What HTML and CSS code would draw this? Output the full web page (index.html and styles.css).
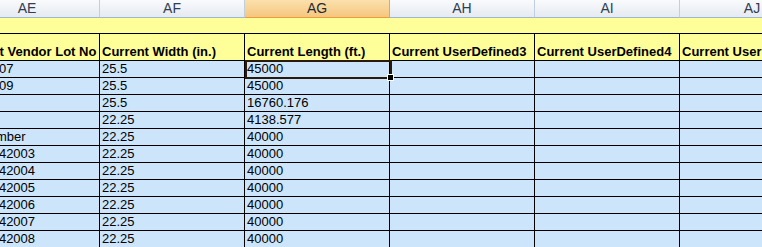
FILE: index.html
```html
<!DOCTYPE html>
<html>
<head>
<meta charset="utf-8">
<link rel="stylesheet" href="styles.css">
</head>
<body>
<div class="sheet">
  <div class="colheads">
    <div class="ch">AE</div>
    <div class="ch">AF</div>
    <div class="ch ch-active">AG</div>
    <div class="ch">AH</div>
    <div class="ch">AI</div>
    <div class="ch">AJ</div>
  </div>
  <div class="band"></div>
  <div class="grid">
    <div class="cell hd">Current Vendor Lot No</div>
    <div class="cell hd">Current Width (in.)</div>
    <div class="cell hd">Current Length (ft.)</div>
    <div class="cell hd">Current UserDefined3</div>
    <div class="cell hd">Current UserDefined4</div>
    <div class="cell hd">Current UserDefined5</div>

    <div class="cell">PKG1007</div><div class="cell">25.5</div><div class="cell">45000</div><div class="cell"></div><div class="cell"></div><div class="cell"></div>
    <div class="cell">PKG1009</div><div class="cell">25.5</div><div class="cell">45000</div><div class="cell"></div><div class="cell"></div><div class="cell"></div>
    <div class="cell"></div><div class="cell">25.5</div><div class="cell">16760.176</div><div class="cell"></div><div class="cell"></div><div class="cell"></div>
    <div class="cell"></div><div class="cell">22.25</div><div class="cell">4138.577</div><div class="cell"></div><div class="cell"></div><div class="cell"></div>
    <div class="cell">PO Number</div><div class="cell">22.25</div><div class="cell">40000</div><div class="cell"></div><div class="cell"></div><div class="cell"></div>
    <div class="cell">PKG1042003</div><div class="cell">22.25</div><div class="cell">40000</div><div class="cell"></div><div class="cell"></div><div class="cell"></div>
    <div class="cell">PKG1042004</div><div class="cell">22.25</div><div class="cell">40000</div><div class="cell"></div><div class="cell"></div><div class="cell"></div>
    <div class="cell">PKG1042005</div><div class="cell">22.25</div><div class="cell">40000</div><div class="cell"></div><div class="cell"></div><div class="cell"></div>
    <div class="cell">PKG1042006</div><div class="cell">22.25</div><div class="cell">40000</div><div class="cell"></div><div class="cell"></div><div class="cell"></div>
    <div class="cell">PKG1042007</div><div class="cell">22.25</div><div class="cell">40000</div><div class="cell"></div><div class="cell"></div><div class="cell"></div>
    <div class="cell">PKG1042008</div><div class="cell">22.25</div><div class="cell">40000</div><div class="cell"></div><div class="cell"></div><div class="cell"></div>
  </div>
  <div class="selection"><span class="handle"></span></div>
</div>
</body>
</html>
```
FILE: styles.css
```css
html, body {
  margin: 0;
  padding: 0;
  background: #ffffff;
}
body {
  width: 762px;
  height: 247px;
  overflow: hidden;
  font-family: "Liberation Sans", Arial, sans-serif;
}
.sheet {
  position: relative;
  width: 870px;
  margin-left: -45px;
}
.colheads {
  display: flex;
  height: 18px;
}
.ch {
  box-sizing: border-box;
  width: 145px;
  height: 18px;
  flex: none;
  border-right: 1px solid #c0cedd;
  border-bottom: 1px solid #9eb6ce;
  background: linear-gradient(#f9fafc, #e5eaf1);
  color: #2f3e52;
  font-size: 14px;
  line-height: 17px;
  text-align: center;
}
.ch-active {
  background: linear-gradient(#fbe0ac, #f5c77e);
  border-right-color: #f2a44b;
  border-bottom-color: #f29b3c;
  color: #1f2a38;
}
.band {
  box-sizing: border-box;
  height: 16px;
  background: #ffff99;
  border-bottom: 1px solid #000000;
}
.grid {
  display: grid;
  grid-template-columns: repeat(6, 145px);
  grid-template-rows: 27px;
  grid-auto-rows: 17px;
}
.cell {
  box-sizing: border-box;
  border-right: 1px solid #000000;
  border-bottom: 1px solid #000000;
  background: #cce5fb;
  padding: 0 2px;
  font-size: 13px;
  line-height: 16px;
  color: #000000;
  white-space: nowrap;
  overflow: hidden;
  display: flex;
  align-items: flex-end;
}
.hd {
  background: #ffff99;
  font-weight: bold;
}
.selection {
  position: absolute;
  left: 290px;
  top: 60px;
  width: 147px;
  height: 19px;
  box-sizing: border-box;
  border: 2px solid #2a1a0c;
}
.handle {
  position: absolute;
  right: -4px;
  bottom: -4px;
  width: 5px;
  height: 5px;
  background: #000000;
  border: 1px solid #ffffff;
}
```
